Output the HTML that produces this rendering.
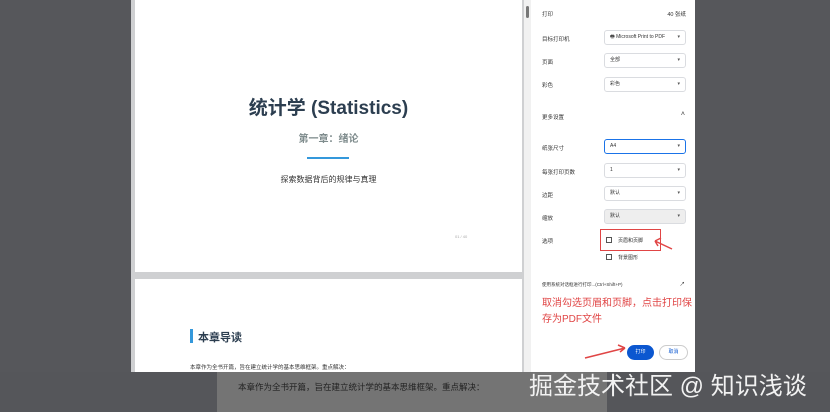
<!DOCTYPE html>
<html><head><meta charset="utf-8"><style>
*{margin:0;padding:0;box-sizing:border-box}
body{width:830px;height:412px;overflow:hidden;background:#56575b;font-family:"Liberation Sans","Noto Sans CJK SC",sans-serif;position:relative}
.abs{position:absolute}
.pv{left:131px;top:0;width:393px;height:372px;background:#cfd0d2}
.pg{background:#fff;left:135px;width:387px}
.panel{left:531px;top:0;width:164px;height:372px;background:#fff;font-size:5.5px;color:#333}
.lbl{position:absolute;left:11px}
.sel{position:absolute;left:73px;width:82px;height:15px;border:1px solid #dadce0;border-radius:3px;font-size:5px;padding-left:5px;line-height:13px;text-align:left}
.sel:after{content:"▾";position:absolute;right:5px;top:0;font-size:5px;color:#555}
</style></head><body>
<div class="abs pv"></div>
<div class="abs pg" style="top:0;height:272px">
 <div class="abs" style="left:0;width:387px;top:93px;text-align:center;font-size:19px;font-weight:bold;color:#2c3e50">统计学 (Statistics)</div>
 <div class="abs" style="left:0;width:387px;top:130px;text-align:center;font-size:10px;font-weight:bold;color:#7f8c8d">第一章：绪论</div>
 <div class="abs" style="left:172px;top:157px;width:42px;height:2px;background:#3498db"></div>
 <div class="abs" style="left:0;width:387px;top:174px;text-align:center;font-size:8px;color:#333">探索数据背后的规律与真理</div>
 <div class="abs" style="left:320px;top:234px;font-size:4px;color:#aaa">01 / 40</div>
</div>
<div class="abs pg" style="top:279px;height:93px">
 <div class="abs" style="left:55px;top:50px;width:3px;height:14px;background:#3498db"></div>
 <div class="abs" style="left:63px;top:50px;font-size:11px;font-weight:bold;color:#2c3e50">本章导读</div>
 <div class="abs" style="left:55px;top:84px;font-size:5.5px;color:#333">本章作为全书开篇，旨在建立统计学的基本思维框架。重点解决：</div>
</div>
<div class="abs" style="left:524px;top:0;width:7px;height:372px;background:#f1f1f1"></div>
<div class="abs" style="left:526px;top:6px;width:3px;height:12px;background:#777;border-radius:2px"></div>
<div class="abs panel">
 <div class="lbl" style="top:10px">打印</div><div class="abs" style="right:9px;top:10px">40 张纸</div>
 <div class="lbl" style="top:35px">目标打印机</div><div class="sel" style="top:30px;padding-left:5px">🖶 Microsoft Print to PDF</div>
 <div class="lbl" style="top:58px">页面</div><div class="sel" style="top:53px">全部</div>
 <div class="lbl" style="top:81px">彩色</div><div class="sel" style="top:77px">彩色</div>
 <div class="lbl" style="top:113px">更多设置</div><div class="abs" style="right:10px;top:111px;font-size:7px">˄</div>
 <div class="lbl" style="top:144px">纸张尺寸</div><div class="sel" style="top:139px;border:1.5px solid #1a73e8">A4</div>
 <div class="lbl" style="top:168px">每张打印页数</div><div class="sel" style="top:163px">1</div>
 <div class="lbl" style="top:191px">边距</div><div class="sel" style="top:186px">默认</div>
 <div class="lbl" style="top:214px">缩放</div><div class="sel" style="top:209px;background:#eee">默认</div>
 <div class="lbl" style="top:237px">选项</div>
 <div class="abs" style="left:69px;top:229px;width:61px;height:22px;border:1.5px solid #e04545"></div>
 <div class="abs" style="left:75px;top:237px;width:6px;height:6px;border:1px solid #555"></div><div class="abs" style="left:87px;top:237px;font-size:5px">页眉和页脚</div>
 <div class="abs" style="left:75px;top:254px;width:6px;height:6px;border:1px solid #555"></div><div class="abs" style="left:87px;top:254px;font-size:5px">背景图形</div>
 <div class="lbl" style="top:282px;font-size:4.5px">使用系统对话框进行打印...(Ctrl+Shift+P)</div><div class="abs" style="right:10px;top:280px">↗</div>
 <div class="abs" style="left:11px;top:296px;font-size:10px;color:#e04545;line-height:16px;width:156px">取消勾选页眉和页脚，点击打印保存为PDF文件</div>
 <div class="abs" style="left:96px;top:345px;width:27px;height:15px;border-radius:8px;background:#0b57d0;color:#fff;font-size:5px;text-align:center;line-height:15px">打印</div>
 <div class="abs" style="left:128px;top:345px;width:29px;height:15px;border-radius:8px;border:1px solid #ccc;color:#0b57d0;font-size:5px;text-align:center;line-height:13px">取消</div>
</div>
<svg class="abs" style="left:580px;top:230px" width="110" height="135"><path d="M92 19 L75 11 M75 11 L81 8 M75 11 L78 16" stroke="#e04545" stroke-width="1.5" fill="none"/><path d="M5 128 L45 118 M45 118 L38 115 M45 118 L40 122" stroke="#e04545" stroke-width="1.5" fill="none"/></svg>
<div class="abs" style="left:0;top:372px;width:830px;height:40px;background:#55565a"></div>
<div class="abs" style="left:217px;top:372px;width:390px;height:40px;background:#747474"></div>
<div class="abs" style="left:238px;top:381px;font-size:8.5px;color:#222">本章作为全书开篇，旨在建立统计学的基本思维框架。重点解决：</div>
<div class="abs" style="left:529px;top:366px;font-size:24px;color:#f2f2f2">掘金技术社区 @ 知识浅谈</div>
</body></html>
